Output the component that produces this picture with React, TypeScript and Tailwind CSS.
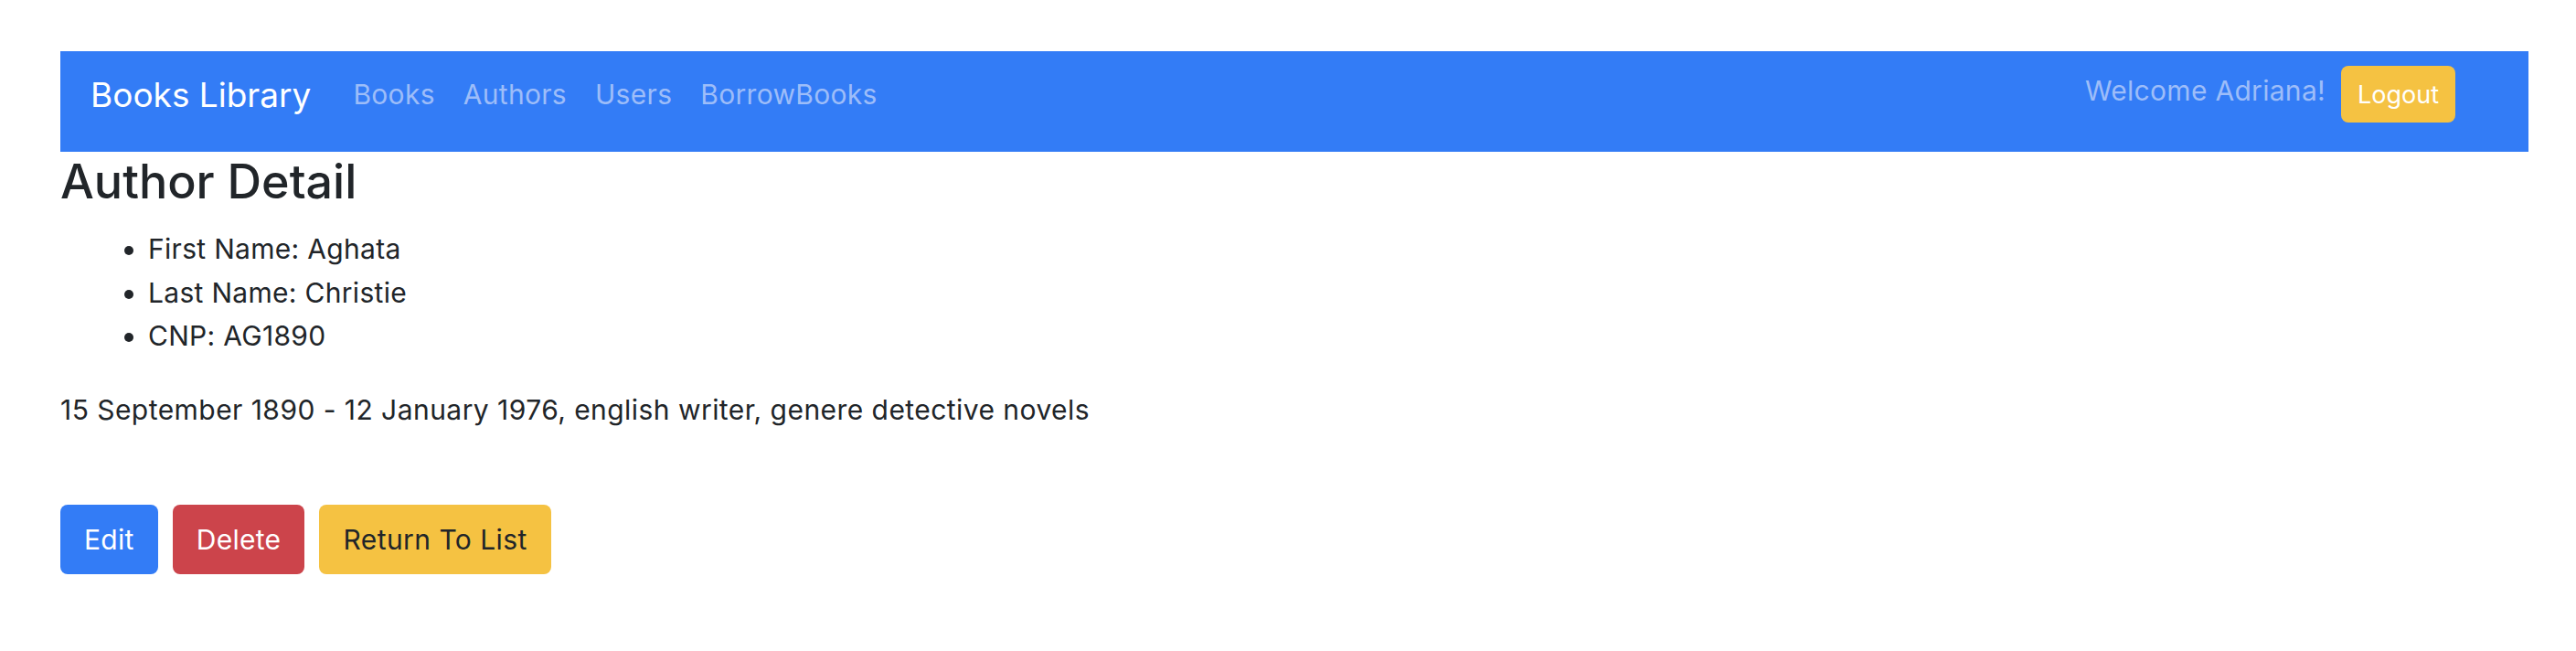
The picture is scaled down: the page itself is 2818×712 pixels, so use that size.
import React from 'react';

const links = ['Books', 'Authors', 'Users', 'BorrowBooks'];

const details = [
  { label: 'First Name', value: 'Aghata' },
  { label: 'Last Name', value: 'Christie' },
  { label: 'CNP', value: 'AG1890' },
];

const App: React.FC = () => {
  return (
    <div
      className="min-h-screen bg-white text-[#212529]"
      style={{ fontFamily: 'Inter, "Noto Sans", sans-serif' }}
    >
      <div className="pt-[56px] pl-[66px] w-[2766px]">
        {/* Navbar */}
        <nav className="h-[110px] bg-[#337cf6] flex items-center pl-[33px] pr-[80px] pb-[16px]">
          <span className="text-[37px] text-white mr-[46px] leading-none">Books Library</span>
          <ul className="flex items-center gap-[31px]">
            {links.map((l) => (
              <li key={l} className="text-[30px] tracking-[0.01em] text-[#9dbdf9] leading-none">
                {l}
              </li>
            ))}
          </ul>
          <div className="ml-auto flex items-center gap-[17px]">
            <span className="text-[30px] tracking-[0.01em] text-[#9dbdf9] leading-none -mt-[8px]">
              Welcome Adriana!
            </span>
            <button className="h-[62px] px-[18px] rounded-[8px] bg-[#f5c242] text-white text-[27px] leading-none">
              Logout
            </button>
          </div>
        </nav>

        {/* Content */}
        <h2 className="text-[52px] font-medium leading-[66px] mb-[17px]">Author Detail</h2>
        <ul className="list-disc pl-[96px] text-[30px] tracking-[0.01em] leading-[47.5px] mb-[33px]">
          {details.map((d) => (
            <li key={d.label}>
              {d.label}: {d.value}
            </li>
          ))}
        </ul>
        <p className="text-[30px] tracking-[0.015em] leading-[47.5px]">
          15 September 1890 - 12 January 1976, english writer, genere detective novels
        </p>

        <div className="mt-[80px] flex gap-[16px]">
          <button className="h-[76px] px-[26px] rounded-[8px] bg-[#337cf6] text-white text-[30px] tracking-[0.01em]">
            Edit
          </button>
          <button className="h-[76px] px-[26px] rounded-[8px] bg-[#cc444b] text-white text-[30px] tracking-[0.01em]">
            Delete
          </button>
          <button className="h-[76px] px-[26px] rounded-[8px] bg-[#f5c242] text-[#212529] text-[30px] tracking-[0.015em]">
            Return To List
          </button>
        </div>
      </div>
    </div>
  );
};

export default App;
